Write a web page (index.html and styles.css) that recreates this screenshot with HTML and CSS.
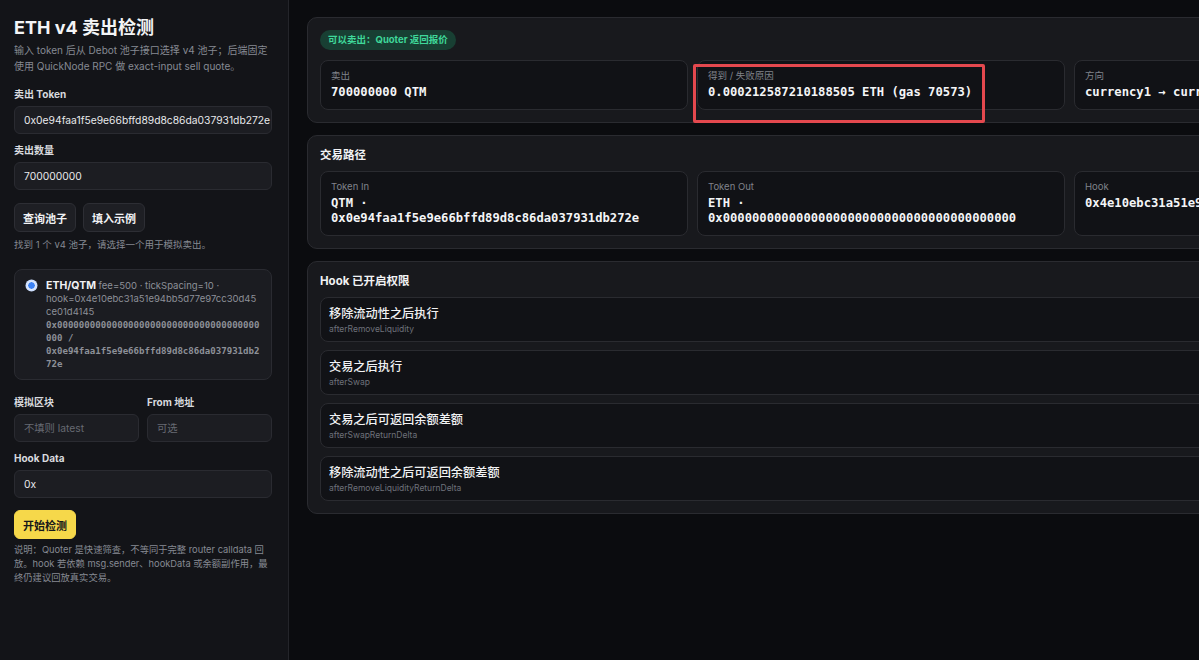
FILE: index.html
```html
<!DOCTYPE html>
<html lang="zh">
<head>
<meta charset="utf-8">
<title>ETH v4 卖出检测</title>
<link rel="stylesheet" href="styles.css">
</head>
<body>
<div class="app">
  <aside class="sidebar">
    <h1 class="title">ETH v4 卖出检测</h1>
    <p class="sub">输入 token 后从 Debot 池子接口选择 v4 池子；后端固定使用 QuickNode RPC 做 exact-input sell quote。</p>

    <label class="label l-first">卖出 Token</label>
    <div class="input">0x0e94faa1f5e9e66bffd89d8c86da037931db272e</div>

    <label class="label">卖出数量</label>
    <div class="input">700000000</div>

    <div class="btns">
      <button class="btn">查询池子</button>
      <button class="btn">填入示例</button>
    </div>
    <p class="hint">找到 1 个 v4 池子，请选择一个用于模拟卖出。</p>

    <div class="pool">
      <span class="radio"></span>
      <div class="pool-text">
        <div><b class="pool-name">ETH/QTM</b> fee=500 · tickSpacing=10 · hook=0x4e10ebc31a51e94bb5d77e97cc30d45ce01d4145</div>
        <div class="mono-sm">0x0000000000000000000000000000000000000000 / 0x0e94faa1f5e9e66bffd89d8c86da037931db272e</div>
      </div>
    </div>

    <div class="row2">
      <div class="col">
        <label class="label">模拟区块</label>
        <div class="input ph">不填则 latest</div>
      </div>
      <div class="col">
        <label class="label">From 地址</label>
        <div class="input ph">可选</div>
      </div>
    </div>

    <label class="label">Hook Data</label>
    <div class="input">0x</div>

    <button class="btn btn-primary">开始检测</button>
    <p class="note">说明：Quoter 是快速筛查，不等同于完整 router calldata 回放。hook 若依赖 msg.sender、hookData 或余额副作用，最终仍建议回放真实交易。</p>
  </aside>

  <main class="main">
    <section class="panel">
      <span class="badge">可以卖出：Quoter 返回报价</span>
      <div class="cards cards-top">
        <div class="card">
          <div class="card-label">卖出</div>
          <div class="card-value">700000000 QTM</div>
        </div>
        <div class="card">
          <div class="card-label">得到 / 失败原因</div>
          <div class="card-value">0.000212587210188505 ETH (gas 70573)</div>
        </div>
        <div class="card">
          <div class="card-label">方向</div>
          <div class="card-value">currency1 → currency0</div>
        </div>
        <div class="highlight"></div>
      </div>
    </section>

    <section class="panel">
      <h2 class="panel-title">交易路径</h2>
      <div class="cards">
        <div class="card">
          <div class="card-label">Token In</div>
          <div class="card-value">QTM · 0x0e94faa1f5e9e66bffd89d8c86da037931db272e</div>
        </div>
        <div class="card">
          <div class="card-label">Token Out</div>
          <div class="card-value">ETH · 0x0000000000000000000000000000000000000000</div>
        </div>
        <div class="card">
          <div class="card-label">Hook</div>
          <div class="card-value">0x4e10ebc31a51e94bb5d77e97cc30d45ce01d4145</div>
        </div>
      </div>
    </section>

    <section class="panel">
      <h2 class="panel-title">Hook 已开启权限</h2>
      <div class="perms">
        <div class="perm">
          <div class="perm-title">移除流动性之后执行</div>
          <div class="perm-sub">afterRemoveLiquidity</div>
        </div>
        <div class="perm">
          <div class="perm-title">交易之后执行</div>
          <div class="perm-sub">afterSwap</div>
        </div>
        <div class="perm">
          <div class="perm-title">交易之后可返回余额差额</div>
          <div class="perm-sub">afterSwapReturnDelta</div>
        </div>
        <div class="perm">
          <div class="perm-title">移除流动性之后可返回余额差额</div>
          <div class="perm-sub">afterRemoveLiquidityReturnDelta</div>
        </div>
      </div>
    </section>
  </main>
</div>
</body>
</html>
```

FILE: styles.css
```css
* { box-sizing: border-box; }
html, body {
  margin: 0;
  padding: 0;
  height: 100%;
  overflow: hidden;
  background: #0b0c0f;
  color: #e6e7ea;
  font-family: Inter, "Noto Sans CJK SC", sans-serif;
}
.app {
  display: flex;
  min-height: 100%;
  align-items: stretch;
}
.sidebar {
  flex: 0 0 289px;
  width: 289px;
  height: 660px;
  background: #131418;
  border-right: 1px solid #24252a;
  padding: 16px 16px 0 14px;
  display: flex;
  flex-direction: column;
  align-items: stretch;
}
.title {
  margin: 0;
  font-size: 18px;
  line-height: 24px;
  font-weight: 700;
  color: #f3f4f6;
}
.sub {
  margin: 2px 0 0;
  font-size: 10px;
  line-height: 16px;
  color: #868a93;
}
.label {
  display: block;
  font-size: 10px;
  line-height: 14px;
  font-weight: 700;
  color: #d8dade;
  margin-top: 9px;
  margin-bottom: 5px;
}
.l-first { margin-top: 13px; }
.input {
  height: 28px;
  line-height: 26px;
  border: 1px solid #2a2b31;
  border-radius: 6px;
  background: #1c1d22;
  padding: 0 9px;
  font-size: 10.3px;
  color: #e8e9ec;
  white-space: nowrap;
  overflow: hidden;
}
.input.ph { color: #676a72; }
.btns {
  display: flex;
  gap: 7px;
  margin-top: 13px;
}
.btn {
  height: 29px;
  padding: 0 8px;
  border-radius: 6px;
  border: 1px solid #2d2e34;
  background: #1e1f24;
  color: #f1f2f4;
  font-family: Inter, "Noto Sans CJK SC", sans-serif;
  font-size: 11px;
  font-weight: 700;
}
.btn-primary {
  align-self: flex-start;
  margin-top: 12px;
  background: #f6d84a;
  border-color: #f6d84a;
  color: #17171a;
}
.hint {
  margin: 6px 0 0;
  font-size: 9.5px;
  line-height: 14px;
  color: #868a93;
}
.pool {
  margin-top: 17px;
  display: flex;
  align-items: flex-start;
  gap: 10px;
  padding: 9px 10px 8px 12px;
  border: 1px solid #2a2b31;
  border-radius: 8px;
  background: #1b1c21;
}
.radio {
  flex: 0 0 9px;
  width: 9px;
  height: 9px;
  margin-top: 2px;
  border-radius: 50%;
  background: #3b82f6;
  box-shadow: 0 0 0 1.5px #cfe0ff;
  border: 1.5px solid #ffffff;
}
.pool-text {
  flex: 1;
  min-width: 0;
  font-size: 9.5px;
  line-height: 13.2px;
  color: #8d9098;
  overflow-wrap: anywhere;
}
.pool-name {
  color: #f1f2f4;
  font-size: 10.5px;
  font-weight: 700;
}
.mono-sm {
  font-family: "DejaVu Sans Mono", monospace;
  font-size: 9.1px;
  font-weight: 700;
  color: #8d9098;
}
.row2 {
  display: flex;
  gap: 8px;
  margin-top: 6px;
}
.row2 .col { flex: 1; }
.note {
  margin: 4px 0 0;
  font-size: 9.3px;
  line-height: 14px;
  color: #868a93;
}

.main {
  flex: 0 0 auto;
  padding: 17px 18px;
  display: flex;
  flex-direction: column;
  gap: 12px;
  width: max-content;
}
.panel {
  background: #18191d;
  border: 1px solid #2a2b30;
  border-radius: 10px;
  padding: 12px;
}
.badge {
  display: block;
  width: fit-content;
  height: 20px;
  line-height: 20px;
  padding: 0 8px;
  border-radius: 10px;
  background: #183f33;
  color: #3fd89a;
  font-size: 9.5px;
  font-weight: 700;
}
.cards {
  display: grid;
  grid-template-columns: repeat(3, 368px);
  gap: 9px;
  margin-top: 9px;
}
.cards-top {
  position: relative;
  margin-top: 10px;
}
.card {
  background: #111216;
  border: 1px solid #2a2b30;
  border-radius: 8px;
  padding: 8px 10px;
}
.card-label {
  font-size: 9.5px;
  line-height: 14px;
  color: #80838b;
}
.card-value {
  margin-top: 2px;
  font-family: "DejaVu Sans Mono", monospace;
  font-size: 12.2px;
  line-height: 15.5px;
  font-weight: 700;
  color: #f4f5f7;
}
.highlight {
  position: absolute;
  left: 373px;
  top: 4px;
  width: 292px;
  height: 59px;
  border: 3px solid #e4484e;
  border-radius: 2px;
  pointer-events: none;
}
.panel-title {
  margin: 0;
  font-size: 11.5px;
  line-height: 14px;
  font-weight: 700;
  color: #f1f2f4;
}
.perms {
  margin-top: 9px;
  display: flex;
  flex-direction: column;
  gap: 8px;
}
.perm {
  background: #111216;
  border: 1px solid #2a2b30;
  border-radius: 8px;
  padding: 7px 8px 6px;
}
.perm-title {
  font-size: 12.2px;
  line-height: 17px;
  font-weight: 500;
  color: #f1f2f4;
}
.perm-sub {
  margin-top: 1px;
  font-size: 8.5px;
  line-height: 12px;
  color: #6e717a;
}
```
